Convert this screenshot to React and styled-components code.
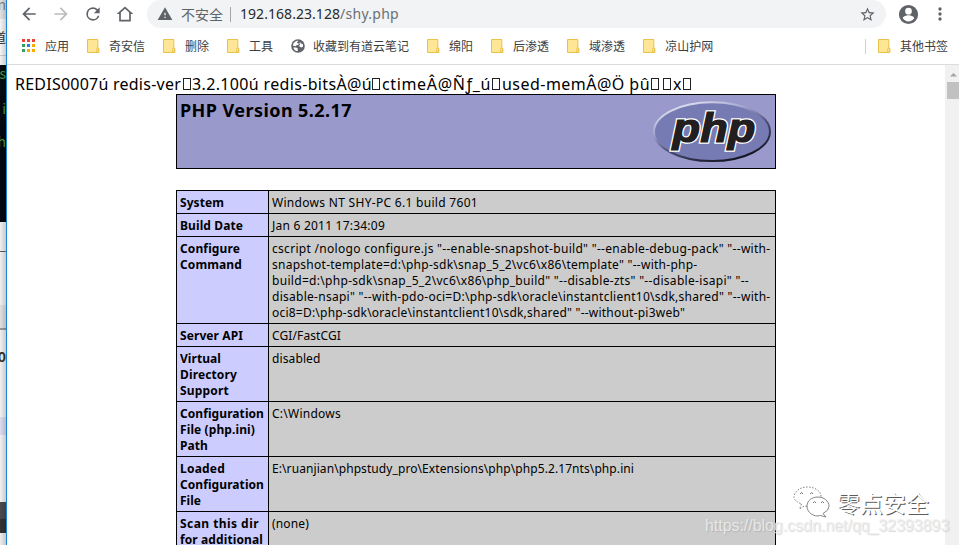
import React, { useLayoutEffect, useRef } from "react";
import styled, { createGlobalStyle } from "styled-components";

const Global = createGlobalStyle`
  * { box-sizing: border-box; }
  html, body { margin: 0; padding: 0; overflow: hidden; background: #fff; }
`;
const sans = `"Noto Sans", "Open Sans", "Noto Sans CJK SC", sans-serif`;
const cjk = `"Noto Sans CJK SC", sans-serif`;

const Desktop = styled.div`
  display: flex;
  width: 959px;
  height: 545px;
  overflow: hidden;
  position: relative;
  font-family: ${sans};
`;
const Backdrop = styled.aside`
  flex: 0 0 6px;
  overflow: hidden;
  background: #eee;
`;
const Slab = styled.div`
  height: ${(p) => p.$h}px;
  background: ${(p) => p.$bg || "#ececec"};
  color: ${(p) => p.$color || "#333"};
  font: ${(p) => p.$weight || 400} ${(p) => p.$size || 14}px/${(p) => p.$lh || p.$h}px ${cjk};
  display: flex;
  justify-content: flex-end;
  overflow: hidden;
  white-space: pre;
`;
const Shade = styled.div`
  position: absolute;
  left: 0;
  top: 0;
  width: 6px;
  height: 545px;
  background: linear-gradient(90deg, transparent, rgba(0, 0, 0, 0.16));
`;
const Browser = styled.main`
  flex: 1;
  display: flex;
  flex-direction: column;
  min-width: 0;
  border-left: 1px solid #1883d7;
  background: #fff;
`;
const Toolbar = styled.header`
  display: flex;
  align-items: center;
  height: 28px;
  padding-left: 12px;
  color: #5f6368;
`;
const NavButton = styled.span`
  width: 32px;
  height: 20px;
  color: ${(p) => (p.$off ? "#babcbe" : "#5f6368")};
  svg { display: block; }
`;
const AddressBar = styled.div`
  display: flex;
  align-items: center;
  width: 739px;
  height: 28px;
  padding: 0 10px 0 10px;
  border-radius: 14px;
  background: #f1f3f4;
`;
const Warning = styled.span`
  font: 14px/20px ${cjk};
  margin-left: 8px;
  color: #5f6368;
`;
const Divider = styled.i`
  width: 1px;
  height: ${(p) => p.$h || 15}px;
  margin: ${(p) => p.$m || "0 9px 0 7px"};
  background: ${(p) => p.$c || "#a3a6a9"};
`;
const Url = styled.span`
  flex: 1;
  font-size: 14px;
  line-height: 20px;
  color: #27292c;
  white-space: nowrap;
`;
const Path = styled.span`color: #6b6f73;`;
const Bookmarks = styled.nav`
  display: flex;
  align-items: center;
  gap: 18px;
  height: 37px;
  padding: 0 11px 0 15px;
  border-bottom: 1px solid #dadce0;
`;
const Bookmark = styled.span`
  display: flex;
  align-items: center;
  gap: ${(p) => p.$gap || 8}px;
  font: 12px/18px ${cjk};
  color: #3c4043;
  white-space: nowrap;
  svg { display: block; flex: none; }
`;
const Spacer = styled.span`flex: 1;`;
const Viewport = styled.section`
  flex: 1;
  display: flex;
  min-height: 0;
`;
const Page = styled.article`
  flex: 1;
  min-width: 0;
  height: 480px;
  overflow: hidden;
  padding: 8px 0 0 8px;
`;
const Dump = styled.div`
  display: flex;
  height: 21px;
  font-size: 16px;
  line-height: 22px;
  color: #000;
`;
const Missing = styled.i`
  flex: none;
  width: 8px;
  height: 12px;
  margin: 5px ${(p) => p.$r ?? 2}px 0 ${(p) => p.$l ?? 2}px;
  border: 1px solid #222;
`;
const Banner = styled.div`
  display: flex;
  justify-content: space-between;
  width: 600px;
  height: 75px;
  margin: 0 0 21px 161px;
  padding: 3px;
  border: 1px solid #000;
  background: #9999cc;
  h1 { margin: 0; font-size: 18px; line-height: 24px; }
`;
const Info = styled.table`
  width: 600px;
  margin-left: 161px;
  border-collapse: separate;
  border-spacing: 0;
  table-layout: fixed;
  border-top: 1px solid #000;
  border-left: 1px solid #000;
  font-size: 12px;
  line-height: 16px;
  th, td {
    padding: 4px 3px 2px;
    text-align: left;
    vertical-align: top;
    border-right: 1px solid #000;
    border-bottom: 1px solid #000;
  }
  th { width: 92px; background: #ccccff; font-weight: 700; }
  td { background: #cccccc; }
`;
const Line = styled.div`height: 16px;`;
const FitText = styled.span`
  display: inline-block;
  white-space: pre;
`;
const Scrollbar = styled.aside`
  width: 14px;
  padding: 7px 0 0 2px;
  background: #f1f1f1;
  svg { display: block; margin-bottom: 5px; }
`;
const Thumb = styled.div`
  height: 17px;
  background: #c1c1c1;
`;
const Mark = styled.div`
  position: absolute;
  left: 793px;
  top: 484px;
  display: flex;
  align-items: center;
  gap: 4px;
  font: 23px/36px ${cjk};
  color: #fff;
  text-shadow: 1px 1px 0 #5c5c5c;
`;
const Source = styled.div`
  position: absolute;
  left: 705px;
  top: 516px;
  font: 16px/20px "Liberation Sans", sans-serif;
  color: rgba(238, 238, 238, 0.85);
  text-shadow: 1px 1px 1px rgba(130, 130, 130, 0.3);
`;

/* Spreads a run of text evenly so that it fills the given advance width. */
function Fit({ w, children }) {
  const ref = useRef(null);
  useLayoutEffect(() => {
    const el = ref.current;
    el.style.width = "auto";
    el.style.letterSpacing = "0px";
    const natural = el.getBoundingClientRect().width;
    el.style.letterSpacing = `${(w - natural) / el.textContent.length}px`;
    el.style.width = `${w}px`;
  }, [w]);
  return <FitText ref={ref}>{children}</FitText>;
}

const Icon = ({ d, size = 20, box = 24 }) => (
  <svg width={size} height={size} viewBox={`0 0 ${box} ${box}`} fill="currentColor"><path d={d} /></svg>
);
const Folder = () => (
  <svg width="14" height="16" viewBox="0 0 14 16">
    <path d="M.5 1.5h10.3v8.7h1v4.3H.5z" fill="#ffe694" stroke="#e9c24a" />
    <path d="M9.7 14.3v-3.1q0-1 1-1t1 1v3.1z" fill="#ffe694" stroke="#e9c24a" />
  </svg>
);
const Apps = () => {
  const colors = ["#ea4335", "#ea4335", "#ea4335", "#34a060", "#1a83f2", "#f9ab00", "#34a060", "#f9ab00", "#f9ab00"];
  return (
    <svg width="13" height="14">
      {colors.map((c, i) => <rect key={i} x={(i % 3) * 5} y={Math.floor(i / 3) * 5} width="3" height="3" fill={c} />)}
    </svg>
  );
};
const Globe = () => (
  <svg width="14" height="14" viewBox="0 0 15 15">
    <circle cx="7.5" cy="7.5" r="7.3" fill="#5f6368" />
    <path d="M8 2 6.200 4.100l2.300 1-.7 1.400-2.200.2-.5 1L2 7.200A5.500 5.500 0 0 1 8 2zM2.400 9l3 .1 2 1.200-.4 1.300.5 1.300C5 13 3.100 11.500 2.400 9zM10 3.100l.2 1.400 1.700.8.5-.1c.5.9.6 1.800.5 2.900l-1.400.9-2.200-.6-.5-1.300 1-1.400-1-1.200z" fill="#fff" />
  </svg>
);
const logoText = {
  x: 20.5, y: 43.5, textLength: 83, lengthAdjust: "spacingAndGlyphs",
  fontFamily: "Liberation Sans, sans-serif", fontSize: 40, fontWeight: 700, fontStyle: "italic",
};
const PhpLogo = () => (
  <svg width="120" height="67" viewBox="0 0 120 67">
    <defs>
      <linearGradient id="rim" x1="0.2" y1="0" x2="0.8" y2="1">
        <stop offset="0" stopColor="#e6e7f3" />
        <stop offset=".3" stopColor="#a5a8d0" />
        <stop offset=".6" stopColor="#484a70" />
        <stop offset="1" stopColor="#0c0c16" />
      </linearGradient>
    </defs>
    <ellipse cx="60" cy="33.700" rx="58" ry="29.400" fill="#777bb4" stroke="url(#rim)" strokeWidth="2" />
    <text {...logoText} fill="#231f20" stroke="#fff" strokeWidth="3.600" paintOrder="stroke">php</text>
    <text {...logoText} fill="#231f20" stroke="#231f20" strokeWidth="1.200" aria-hidden="true">php</text>
  </svg>
);
const WeChat = () => (
  <svg width="40" height="36" viewBox="0 0 40 36" fill="#fff" stroke="#858585" strokeWidth="1">
    <path d="M8.500 20 6.500 25l5-3c10 2 16.500-3 16.500-9.500C28 7 22 3 14.500 3S1 7.500 1 13q0 4 7.500 7z" strokeDasharray="1.500 1.500" />
    <path d="m30 29.500 3 3.500-5.500-1.500c-7 2-13.500-3-13.500-9.500 0-5.500 5-9 11-9s11 4 11 9.500q0 4-6 7z" />
    <path d="M7 10q2-3 3 0M17 10q2-3 3 0M20 19q1.500-3 3 0M28 19q1.500-3 3 0" fill="none" stroke="#777" />
  </svg>
);

const bookmarks = ["奇安信", "删除", "工具", "收藏到有道云笔记", "绵阳", "后渗透", "域渗透", "凉山护网"];

/* Every line is a [text, width] pair. */
const rows = [
  [[["System", 44]], [["Windows NT SHY-PC 6.1 build 7601", 206]]],
  [[["Build Date", 63]], [["Jan 6 2011 17:34:09", 113]]],
  [[["Configure", 60], ["Command", 62]], [
    ['cscript /nologo configure.js "--enable-snapshot-build" "--enable-debug-pack" "--with-', 498.5],
    ['snapshot-template=d:\\php-sdk\\snap_5_2\\vc6\\x86\\template" "--with-php-', 425.5],
    ['build=d:\\php-sdk\\snap_5_2\\vc6\\x86\\php_build" "--disable-zts" "--disable-isapi" "--', 477],
    ['disable-nsapi" "--with-pdo-oci=D:\\php-sdk\\oracle\\instantclient10\\sdk,shared" "--with-', 498.5],
    ['oci8=D:\\php-sdk\\oracle\\instantclient10\\sdk,shared" "--without-pi3web"', 413],
  ]],
  [[["Server API", 63]], [["CGI/FastCGI", 69]]],
  [[["Virtual", 41], ["Directory", 57], ["Support", 49]], [["disabled", 48.5]]],
  [[["Configuration", 84], ["File (php.ini)", 75], ["Path", 28]], [["C:\\Windows", 69]]],
  [[["Loaded", 45], ["Configuration", 84], ["File", 21]], [["E:\\ruanjian\\phpstudy_pro\\Extensions\\php\\php5.2.17nts\\php.ini", 362]]],
  [[["Scan this dir", 79], ["for additional", 83]], [["(none)", 37]]],
];
const lines = (list) => list.map(([text, w]) => <Line key={text}><Fit w={w}>{text}</Fit></Line>);

export default function App() {
  return (
    <Desktop>
      <Global />
      <Backdrop>
        <Slab $h={19} $bg="#e2e2e2" $color="#888" $lh={9}>n</Slab>
        <Slab $h={36} $bg="#f5f5f5" $size={13} $lh={36}>道</Slab>
        <Slab $h={1} $bg="#ccc" />
        <Slab $h={9} $bg="#f2f2f2" />
        <Slab $h={31} $bg="#050b10" $color="#469a3b" $lh={16}>s</Slab>
        <Slab $h={30} $bg="#04090f" $color="#469a3b" $lh={24}>i</Slab>
        <Slab $h={96} $bg="#02060f" $color="#469a3b" $lh={30}>h</Slab>
        <Slab $h={83} $bg="#f0f0f0" $size={12} $lh={46}>-_</Slab>
        <Slab $h={23} $bg="#e0e0e0" />
        <Slab $h={2} $bg="#999" />
        <Slab $h={87} $bg="#f1f1f1" $weight={700} $lh={52}>0</Slab>
        <Slab $h={18} $bg="#dcdcf0" />
        <Slab $h={67} $bg="#f1f1f1" />
        <Slab $h={17} $bg="#4b4b4d" />
        <Slab $h={14} $bg="#333335" />
        <Slab $h={12} $bg="#eee" />
        <Shade />
      </Backdrop>
      <Browser>
        <Toolbar>
          <NavButton><Icon d="M20 11H7.830l5.590-5.590L12 4l-8 8 8 8 1.410-1.410L7.830 13H20v-2z" /></NavButton>
          <NavButton $off><Icon d="m12 4-1.410 1.410L16.170 11H4v2h12.170l-5.580 5.590L12 20l8-8z" /></NavButton>
          <NavButton><Icon d="M17.650 6.350A7.960 7.960 0 0 0 12 4a8 8 0 1 0 7.730 10h-2.080A6 6 0 1 1 12 6c1.660 0 3.140.69 4.220 1.780L13 11h7V4z" /></NavButton>
          <NavButton><Icon d="M12 3 2 12h3v9h14v-9h3zm0 2.700 5 4.500V19H7v-8.800z" /></NavButton>
          <AddressBar>
            <Icon size={16} d="M1 21h22L12 2 1 21zm12-3h-2v-2h2v2zm0-4h-2v-4h2v4z" />
            <Warning><Fit w={42}>不安全</Fit></Warning>
            <Divider />
            <Url><Fit w={100}>192.168.23.128</Fit><Path><Fit w={59}>/shy.php</Fit></Path></Url>
            <Icon size={17} d="m22 9.240-7.190-.62L12 2 9.190 8.630 2 9.240l5.460 4.730L5.820 21 12 17.270 18.180 21l-1.630-7.030zM12 15.400l-3.760 2.270 1-4.280-3.320-2.880 4.380-.38L12 6.100l1.710 4.040 4.380.38-3.320 2.880 1 4.280z" />
          </AddressBar>
          <Spacer />
          <Icon size={23} d="M12 2a10 10 0 1 0 0 20 10 10 0 0 0 0-20zm0 3a3.500 3.500 0 1 1 0 7 3.500 3.500 0 0 1 0-7zm0 14.200a7.200 7.200 0 0 1-6-3.220c.03-2 4-3.080 6-3.080s5.970 1.090 6 3.080a7.200 7.200 0 0 1-6 3.220z" />
          <Spacer />
          <Icon size={20} d="M12 8a2 2 0 1 0 0-4 2 2 0 0 0 0 4zm0 2a2 2 0 1 0 0 4 2 2 0 0 0 0-4zm0 6a2 2 0 1 0 0 4 2 2 0 0 0 0-4z" />
          <Divider $c="transparent" $m="0 8px 0 0" />
        </Toolbar>
        <Bookmarks>
          <Bookmark $gap={10}><Apps />应用</Bookmark>
          {bookmarks.map((name) => (
            <Bookmark key={name}>{name.length === 8 ? <Globe /> : <Folder />}<span>{name}</span></Bookmark>
          ))}
          <Spacer />
          <Divider $c="#cfd1d4" $m="0 -6px 0 0" />
          <Bookmark><Folder />其他书签</Bookmark>
        </Bookmarks>
        <Viewport>
          <Page>
            <Dump>
              <Fit w={166}>REDIS0007ú redis-ver</Fit><Missing $l={2} $r={1} />
              <Fit w={180}>3.2.100ú redis-bitsÀ@ú</Fit><Missing $l={0} $r={2} />
              <Fit w={109}>ctimeÂ@Ñƒ_ú</Fit><Missing $l={1} $r={2} />
              <Fit w={148}>used-memÂ@Ö þû</Fit><Missing $l={1} $r={2} /><Missing $l={2} $r={2} />
              <Fit w={9}>x</Fit><Missing $l={1} />
            </Dump>
            <Banner><h1><Fit w={172}>PHP Version 5.2.17</Fit></h1><PhpLogo /></Banner>
            <Info>
              <tbody>
                {rows.map(([head, body]) => (
                  <tr key={head[0][0]}><th>{lines(head)}</th><td>{lines(body)}</td></tr>
                ))}
              </tbody>
            </Info>
          </Page>
          <Scrollbar>
            <svg width="12" height="5"><path d="M3 4.500 6.500 1 10 4.500z" fill="#a3a3a3" /></svg>
            <Thumb />
          </Scrollbar>
        </Viewport>
      </Browser>
      <Mark><WeChat /><Fit w={92}>零点安全</Fit></Mark>
      <Source><Fit w={244}>https://blog.csdn.net/qq_32393893</Fit></Source>
    </Desktop>
  );
}
